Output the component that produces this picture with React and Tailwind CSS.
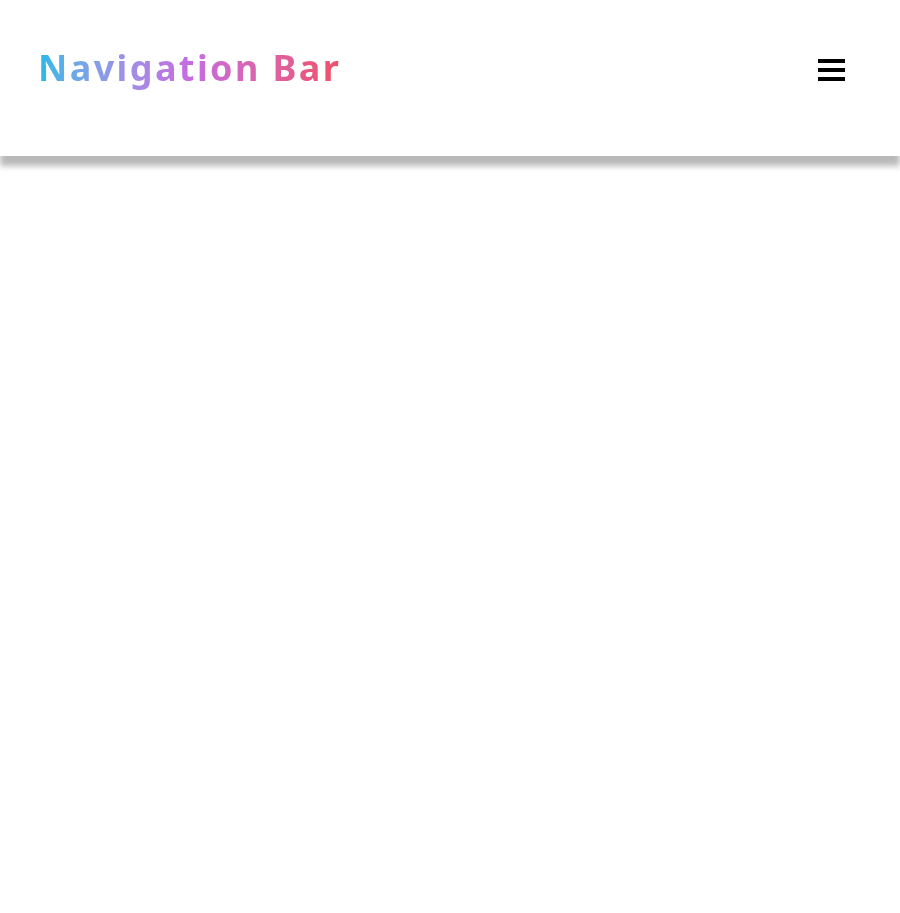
import React from 'react';

export default function App() {
  return (
    <div className="min-h-screen bg-white" style={{ fontFamily: '"Noto Sans", "Noto Sans CJK KR", sans-serif' }}>
      <nav className="flex h-[156px] items-start justify-between bg-white pl-[38px] pr-[55px] pt-[40px] shadow-[0_10px_6px_rgba(0,0,0,0.28)]">
        <h1 className="bg-gradient-to-r from-[#1cb8e9] via-[#c56be2] to-[#f04f66] bg-clip-text text-[36px] font-bold leading-[56px] tracking-[2.4px] text-transparent">
          Navigation Bar
        </h1>
        <button className="mt-[19px] flex w-[27px] flex-col gap-[5px]" aria-label="Menu">
          <span className="block h-[4px] w-full bg-black" />
          <span className="block h-[4px] w-full bg-black" />
          <span className="block h-[4px] w-full bg-black" />
        </button>
      </nav>
    </div>
  );
}
